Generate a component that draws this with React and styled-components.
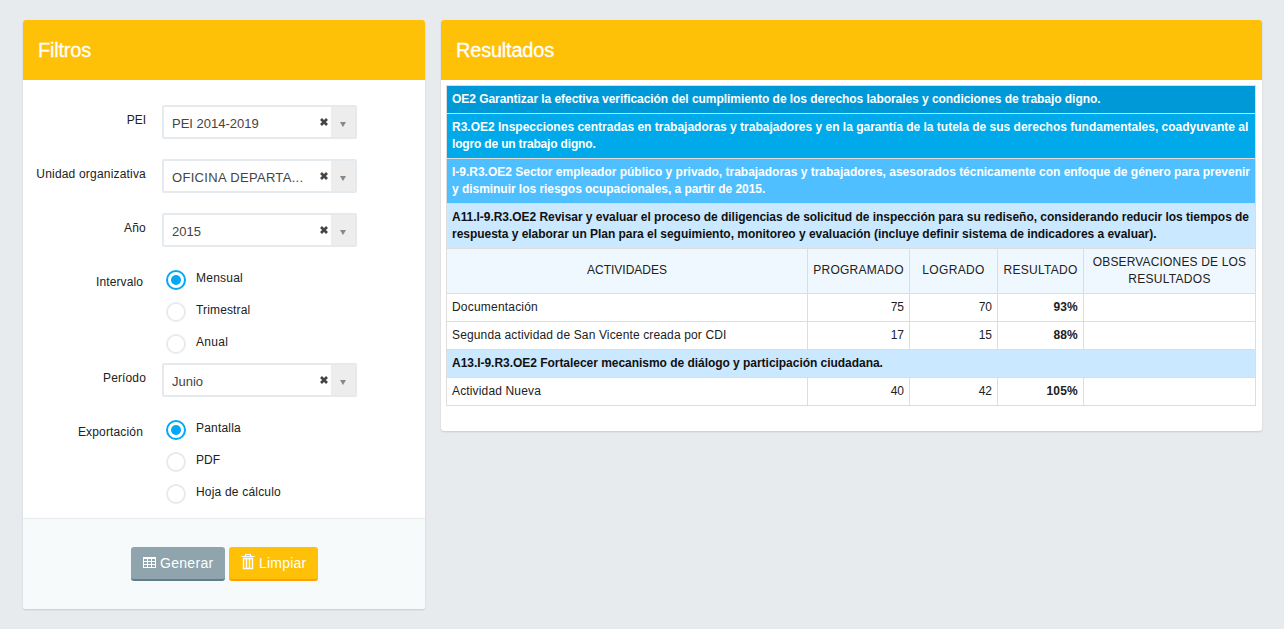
import React from "react";
import styled, { createGlobalStyle } from "styled-components";

const GlobalStyle = createGlobalStyle`
  * { box-sizing: border-box; }
  body {
    margin: 0;
    background: #e7ebee;
    color: #212121;
    font: 12px/17px "Liberation Sans", Arial, sans-serif;
  }
`;

const Page = styled.main`
  display: flex;
  align-items: flex-start;
  gap: 16px;
  min-height: 629px;
  padding: 20px 22px 0 23px;
`;

const Panel = styled.section`
  width: ${(p) => p.$width}px;
  background: #fff;
  border-radius: 3px;
  box-shadow: 0 1px 2px rgba(0, 0, 0, 0.14);
  overflow: hidden;
`;

const PanelHeader = styled.h2`
  height: 60px;
  margin: 0;
  padding: 0 15px;
  background: #ffc107;
  color: #fff;
  font-size: 20px;
  font-weight: 400;
  line-height: 60px;
  letter-spacing: -0.21px;
  -webkit-text-stroke: 0.3px #fff;
`;

const Spaced = styled.span`
  letter-spacing: ${(p) => p.$s || 0}px;
`;

const Form = styled.div`
  display: flex;
  flex-direction: column;
  padding: 25px 0 5px;
`;

const Field = styled.div`
  display: flex;
  height: ${(p) => (p.$group ? 96 : 34)}px;
  margin-bottom: ${(p) => (p.$group ? 0 : 20)}px;
`;

const Label = styled.label`
  width: ${(p) => (p.$group ? 120 : 123)}px;
  padding-top: 7px;
  text-align: right;
`;

const Select = styled.div`
  display: flex;
  width: 195px;
  height: 34px;
  margin-left: 16px;
  border: 2px solid #e5eaee;
  border-radius: 2px;
  color: #444;
  font-size: 13px;
  line-height: 34px;
`;

const SelectValue = styled.span`
  flex: 1;
  height: 30px;
  padding-left: 8px;
  white-space: nowrap;
`;

const Clear = styled.svg`
  width: 8px;
  height: 8px;
  margin: 11px 3px 0 0;
`;

const ArrowBox = styled.span`
  display: flex;
  justify-content: center;
  width: 24px;
  padding-top: 15px;
  background: #ededed;
`;

const Arrow = styled.i`
  width: 0;
  height: 0;
  border: 3px solid transparent;
  border-top: 5px solid #888;
  border-bottom: 0;
`;

const RadioGroup = styled.div`
  margin-left: 23px;
`;

const Radio = styled.div`
  display: flex;
  gap: 10px;
  height: 32px;
  padding-top: 3px;
`;

const Circle = styled.span`
  display: flex;
  align-items: center;
  justify-content: center;
  width: 20px;
  height: 20px;
  border: 2px solid ${(p) => (p.$on ? "#03a9f4" : "#e7ebee")};
  border-radius: 50%;
  &::after {
    content: "";
    width: 10px;
    height: 10px;
    border-radius: 50%;
    background: ${(p) => (p.$on ? "#03a9f4" : "transparent")};
  }
`;

const PanelFooter = styled.footer`
  display: flex;
  gap: 4px;
  height: 91px;
  padding: 28px 0 0 108px;
  border-top: 1px solid #e7ebee;
  background: #f6fafb;
`;

const Button = styled.button`
  display: flex;
  width: ${(p) => p.$width}px;
  height: 34px;
  padding: 0 0 0 ${(p) => p.$pad}px;
  gap: 4px;
  border: 0;
  border-bottom: 2px solid ${(p) => p.$edge};
  border-radius: 3px;
  background: ${(p) => p.$bg};
  color: #fff;
  font: 14px/32px "Liberation Sans", Arial, sans-serif;
`;

const ButtonIcon = styled.svg`
  flex: none;
  margin-top: ${(p) => p.$top}px;
`;

const TableWrap = styled.div`
  padding: 5px 5px 25px;
`;

const Table = styled.table`
  width: 810px;
  table-layout: fixed;
  border-collapse: collapse;
`;

const Column = styled.col`
  width: ${(p) => p.$width}px;
`;

const Cell = styled.td`
  padding: 5px;
  border: 1px solid #ddd;
  text-align: ${(p) => p.$align || "left"};
  font-weight: ${(p) => (p.$bold ? 700 : 400)};
  white-space: nowrap;
`;

const HeadCell = styled(Cell)`
  padding: 5px 0 ${(p) => (p.$single ? 6 : 5)}px;
  background: #f0f8ff;
  text-align: center;
`;

const LevelCell = styled(Cell)`
  background: ${(p) => p.$bg};
  color: ${(p) => p.$color};
  font-weight: 700;
`;

const levels = [
  { bg: "#0099d8", color: "#fff", lines: [["OE2 Garantizar la efectiva verificación del cumplimiento de los derechos laborales y condiciones de trabajo digno.", -0.05]] },
  { bg: "#00a9e9", color: "#fff", lines: [["R3.OE2 Inspecciones centradas en trabajadoras y trabajadores y en la garantía de la tutela de sus derechos fundamentales, coadyuvante al", 0], ["logro de un trabajo digno.", -0.17]] },
  { bg: "#4fbfff", color: "#fff", lines: [["I-9.R3.OE2 Sector empleador público y privado, trabajadoras y trabajadores, asesorados técnicamente con enfoque de género para prevenir", -0.012], ["y disminuir los riesgos ocupacionales, a partir de 2015.", -0.04]] },
  { bg: "#cae8ff", color: "#111", lines: [["A11.I-9.R3.OE2 Revisar y evaluar el proceso de diligencias de solicitud de inspección para su rediseño, considerando reducir los tiempos de", -0.038], ["respuesta y elaborar un Plan para el seguimiento, monitoreo y evaluación (incluye definir sistema de indicadores a evaluar).", -0.03]] },
];

const lastLevel = { bg: "#cae8ff", color: "#111", lines: [["A13.I-9.R3.OE2 Fortalecer mecanismo de diálogo y participación ciudadana.", -0.035]] };

const columnTitles = [["ACTIVIDADES", 0], ["PROGRAMADO", 0.25], ["LOGRADO", 0.35], ["RESULTADO", 0.28]];

function Lines({ lines }) {
  return lines.map(([text, s], i) => (
    <React.Fragment key={text}>
      {i > 0 && <br />}
      <Spaced $s={s}>{text}</Spaced>
    </React.Fragment>
  ));
}

function LevelRow({ bg, color, lines }) {
  return (
    <tr>
      <LevelCell colSpan={5} $bg={bg} $color={color}><Lines lines={lines} /></LevelCell>
    </tr>
  );
}

function ActivityRow({ name, s, planned, done, result }) {
  return (
    <tr>
      <Cell><Spaced $s={s}>{name}</Spaced></Cell>
      <Cell $align="right">{planned}</Cell>
      <Cell $align="right">{done}</Cell>
      <Cell $align="right" $bold><Spaced $s={0.2}>{result}</Spaced></Cell>
      <Cell />
    </tr>
  );
}

function SelectField({ label, ls, value, vs }) {
  return (
    <Field>
      <Label><Spaced $s={ls}>{label}</Spaced></Label>
      <Select>
        <SelectValue><Spaced $s={vs}>{value}</Spaced></SelectValue>
        <Clear viewBox="0 0 8 8"><path d="M1 1 7 7M7 1 1 7" stroke="#444" strokeWidth="2.7" /></Clear>
        <ArrowBox><Arrow /></ArrowBox>
      </Select>
    </Field>
  );
}

function RadioField({ label, ls, options }) {
  return (
    <Field $group>
      <Label $group><Spaced $s={ls}>{label}</Spaced></Label>
      <RadioGroup>
        {options.map(([text, s], i) => (
          <Radio key={text}><Circle $on={i === 0} /><Spaced $s={s}>{text}</Spaced></Radio>
        ))}
      </RadioGroup>
    </Field>
  );
}

export default function App() {
  return (
    <>
      <GlobalStyle />
      <Page>
        <Panel $width={402}>
          <PanelHeader>Filtros</PanelHeader>
          <Form>
            <SelectField label="PEI" value="PEI 2014-2019" />
            <SelectField label="Unidad organizativa" ls={0.19} value="OFICINA DEPARTA..." vs={0.32} />
            <SelectField label="Año" ls={0.2} value="2015" />
            <RadioField label="Intervalo" ls={0.11} options={[["Mensual", 0.23], ["Trimestral", 0.15], ["Anual", 0.3]]} />
            <SelectField label="Período" ls={0.14} value="Junio" />
            <RadioField label="Exportación" ls={0.15} options={[["Pantalla", 0.2], ["PDF", 0.1], ["Hoja de cálculo", 0.19]]} />
          </Form>
          <PanelFooter>
            <Button $width={94} $pad={12} $bg="#90a4ae" $edge="#607d8b">
              <ButtonIcon $top={10} width="13" height="11" viewBox="0 0 13 11">
                <path fillRule="evenodd" fill="#fff" d="M0 0H13V11H0ZM1 2V4H4V2ZM5 2V4H8V2ZM9 2V4H12V2ZM1 5V7H4V5ZM5 5V7H8V5ZM9 5V7H12V5ZM1 8V10H4V8ZM5 8V10H8V8ZM9 8V10H12V8Z" />
              </ButtonIcon>
              <Spaced $s={0.3}>Generar</Spaced>
            </Button>
            <Button $width={89} $pad={12} $bg="#ffc107" $edge="#ffa000">
              <ButtonIcon $top={7} width="14" height="16" viewBox="0 0 14 16">
                <path d="M.5 2.5h13M4.5 2V.5h5V2" fill="none" stroke="#fff" strokeWidth="1.1" />
                <path d="M2.5 4.5h9V14.5h-9ZM5.5 5v9M8.5 5v9" fill="none" stroke="#fff" strokeWidth="1.4" />
              </ButtonIcon>
              <Spaced $s={0.2}>Limpiar</Spaced>
            </Button>
          </PanelFooter>
        </Panel>
        <Panel $width={821}>
          <PanelHeader>Resultados</PanelHeader>
          <TableWrap>
            <Table>
              <colgroup>
                <Column $width={361} />
                <Column $width={102} />
                <Column $width={88} />
                <Column $width={86} />
                <col />
              </colgroup>
              <tbody>
                {levels.map((l) => <LevelRow key={l.bg} {...l} />)}
                <tr>
                  {columnTitles.map(([title, s]) => (
                    <HeadCell key={title} $single><Spaced $s={s}>{title}</Spaced></HeadCell>
                  ))}
                  <HeadCell><Lines lines={[["OBSERVACIONES DE LOS", 0.16], ["RESULTADOS", 0.3]]} /></HeadCell>
                </tr>
                <ActivityRow name="Documentación" s={0.2} planned={75} done={70} result="93%" />
                <ActivityRow name="Segunda actividad de San Vicente creada por CDI" s={0.14} planned={17} done={15} result="88%" />
                <LevelRow {...lastLevel} />
                <ActivityRow name="Actividad Nueva" s={0.15} planned={40} done={42} result="105%" />
              </tbody>
            </Table>
          </TableWrap>
        </Panel>
      </Page>
    </>
  );
}
